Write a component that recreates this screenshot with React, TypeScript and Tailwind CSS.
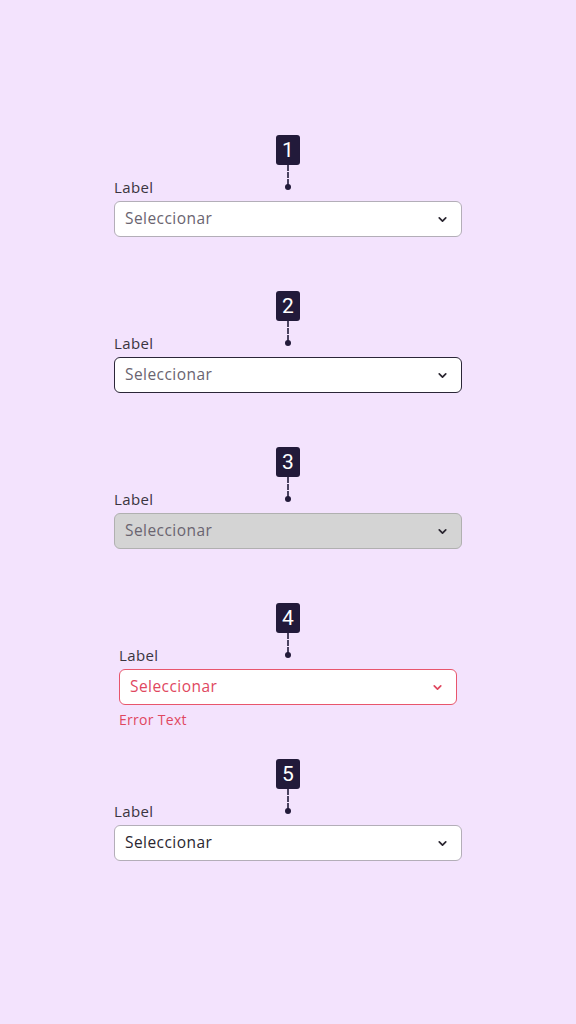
import { ChevronDown } from 'lucide-react'

type Variant = 'default' | 'focus' | 'disabled' | 'error' | 'filled'

const fields: { n: number; variant: Variant }[] = [
  { n: 1, variant: 'default' },
  { n: 2, variant: 'focus' },
  { n: 3, variant: 'disabled' },
  { n: 4, variant: 'error' },
  { n: 5, variant: 'filled' },
]

function Marker({ n }: { n: number }) {
  return (
    <div className="absolute left-1/2 top-0 -translate-x-1/2 flex flex-col items-center">
      <div className="w-[24px] h-[30px] rounded-[3px] bg-[#221a3a] text-white flex items-center justify-center text-[21px] font-['Roboto',sans-serif] leading-none">
        {n}
      </div>
      <div className="h-[20px] w-0 border-l-2 border-dashed border-[#4a4260]" />
      <div className="w-[6px] h-[6px] rounded-full bg-[#221a3a] -mt-[1px]" />
    </div>
  )
}

function SelectField({ n, variant }: { n: number; variant: Variant }) {
  const box = {
    default: 'border border-[#b3aeb8] bg-white text-[#6a6470]',
    focus: 'border-[1.5px] border-[#2b2638] bg-white text-[#6a6470]',
    disabled: 'border border-[#b0b0b0] bg-[#d4d4d4] text-[#6a6470]',
    error: 'border-[1.5px] border-[#e8566c] bg-white text-[#e0475f]',
    filled: 'border border-[#b3aeb8] bg-white text-[#2a2630]',
  }[variant]
  const isError = variant === 'error'

  return (
    <div className="relative h-[156px] w-[348px] pt-[42px] flex flex-col items-center">
      <Marker n={n} />
      <div className={isError ? 'w-[338px]' : 'w-full'}>
        <div className="text-[15px] leading-[20px] tracking-[0.4px] text-[#3a3540]">Label</div>
        <div
          className={`mt-[4px] h-[36px] rounded-[6px] flex items-center justify-between pl-[10px] pr-[12px] text-[15.5px] tracking-[0.45px] ${box}`}
        >
          <span>Seleccionar</span>
          <ChevronDown
            size={13}
            strokeWidth={3.2}
            className={isError ? 'text-[#e0475f]' : 'text-[#2a2630]'}
          />
        </div>
        {isError && (
          <div className="mt-[6px] text-[14px] leading-[18px] tracking-[0.3px] text-[#e0475f]">Error Text</div>
        )}
      </div>
    </div>
  )
}

export default function App() {
  return (
    <div className="min-h-[1024px] w-full bg-[#f3e3fd] font-['Open_Sans',sans-serif] flex flex-col items-center pt-[135px]">
      {fields.map((f) => (
        <SelectField key={f.n} n={f.n} variant={f.variant} />
      ))}
    </div>
  )
}
